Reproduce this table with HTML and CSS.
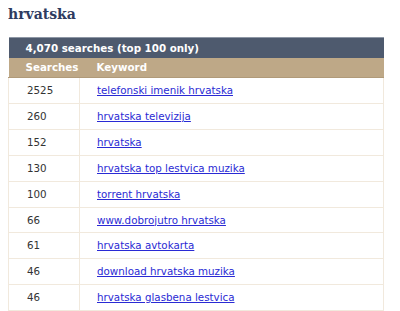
FILE: index.html
```html
<!DOCTYPE html>
<html>
<head>
<meta charset="utf-8">
<title>hrvatska</title>
<link rel="stylesheet" href="styles.css">
</head>
<body>
<h1 class="title">hrvatska</h1>
<table class="kw">
  <colgroup><col class="col1"><col class="col2"></colgroup>
  <thead>
    <tr class="cap"><th colspan="2">4,070 searches (top 100 only)</th></tr>
    <tr class="cols"><th class="c1">Searches</th><th class="c2">Keyword</th></tr>
  </thead>
  <tbody>
    <tr><td class="c1">2525</td><td class="c2"><a href="#">telefonski imenik hrvatska</a></td></tr>
    <tr><td class="c1">260</td><td class="c2"><a href="#">hrvatska televizija</a></td></tr>
    <tr><td class="c1">152</td><td class="c2"><a href="#">hrvatska</a></td></tr>
    <tr><td class="c1">130</td><td class="c2"><a href="#">hrvatska top lestvica muzika</a></td></tr>
    <tr><td class="c1">100</td><td class="c2"><a href="#">torrent hrvatska</a></td></tr>
    <tr><td class="c1">66</td><td class="c2"><a href="#">www.dobrojutro hrvatska</a></td></tr>
    <tr><td class="c1">61</td><td class="c2"><a href="#">hrvatska avtokarta</a></td></tr>
    <tr><td class="c1">46</td><td class="c2"><a href="#">download hrvatska muzika</a></td></tr>
    <tr><td class="c1">46</td><td class="c2"><a href="#">hrvatska glasbena lestvica</a></td></tr>
  </tbody>
</table>
</body>
</html>
```
FILE: styles.css
```css
html, body {
  background: #ffffff;
}
body {
  margin: 0 8px;
  font-family: "DejaVu Sans", Verdana, sans-serif;
  font-size: 10.3px;
  color: #333333;
}
.title {
  margin: 4px 0 13px;
  font-family: "DejaVu Serif", Georgia, serif;
  font-size: 14px;
  font-weight: bold;
  line-height: 20px;
  color: #2e3b60;
}
.kw {
  width: 376px;
  border-collapse: collapse;
  table-layout: fixed;
}
.col1 {
  width: 71px;
}
.kw th {
  text-align: left;
  color: #ffffff;
  font-weight: bold;
  padding: 0 17px;
}
.kw .cap th {
  background: #4e5a6e;
  border-top: 1px solid #8e97a5;
  height: 20px;
  line-height: 20px;
}
.kw .cols th {
  background: #bea887;
  border-bottom: 1px solid #b09a79;
  height: 19px;
  line-height: 19px;
}
.kw td {
  padding: 5px 17px;
  line-height: 14.9px;
  border: 1px solid #f1e9dd;
  border-top: 0;
  white-space: nowrap;
}
.kw td.c1 {
  padding-left: 18px;
}
.kw a {
  color: #2a2ad4;
  text-decoration: underline;
}
```
